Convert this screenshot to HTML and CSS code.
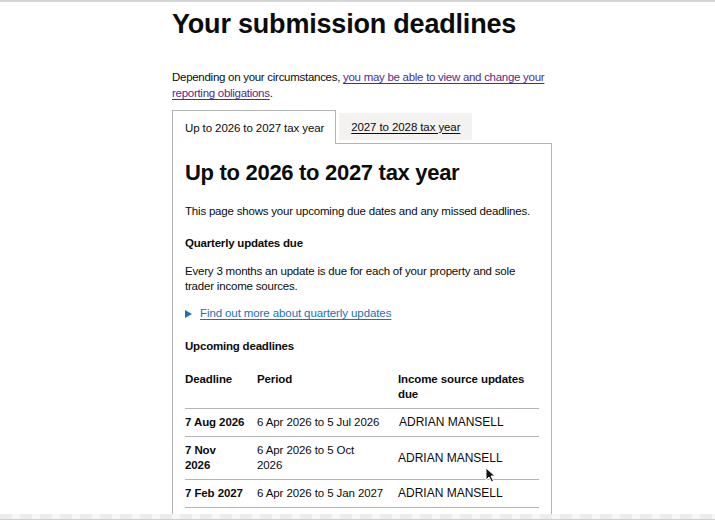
FILE: index.html
```html
<!DOCTYPE html>
<html lang="en">
<head>
<meta charset="utf-8">
<title>Your submission deadlines</title>
<link rel="stylesheet" href="styles.css">
</head>
<body>
<div class="topline"></div>
<main class="page">
  <h1 class="title">Your submission deadlines</h1>
  <p class="intro">Depending on your circumstances, <a class="link-visited" href="#">you may be able to view and change your reporting obligations</a>.</p>
  <div class="tabs">
    <ul class="tab-list">
      <li class="tab tab-selected"><a href="#">Up to 2026 to 2027 tax year</a></li>
      <li class="tab"><a href="#">2027 to 2028 tax year</a></li>
    </ul>
    <section class="panel">
      <h2 class="panel-title">Up to 2026 to 2027 tax year</h2>
      <p class="body p-first">This page shows your upcoming due dates and any missed deadlines.</p>
      <h3 class="subhead">Quarterly updates due</h3>
      <p class="body p-every">Every 3 months an update is due for each of your property and sole trader income sources.</p>
      <div class="details">
        <span class="arrow"></span>
        <a class="link-blue" href="#">Find out more about quarterly updates</a>
      </div>
      <h3 class="subhead sub-upcoming">Upcoming deadlines</h3>
      <table class="table">
        <colgroup>
          <col class="c1"><col class="c2"><col class="c3">
        </colgroup>
        <thead>
          <tr><th>Deadline</th><th>Period</th><th>Income source updates due</th></tr>
        </thead>
        <tbody>
          <tr><td class="date">7 Aug 2026</td><td>6 Apr 2026 to 5 Jul 2026</td><td class="name">ADRIAN MANSELL</td></tr>
          <tr><td class="date">7 Nov<br>2026</td><td>6 Apr 2026 to 5 Oct<br>2026</td><td class="name n2">ADRIAN MANSELL</td></tr>
          <tr><td class="date">7 Feb 2027</td><td>6 Apr 2026 to 5 Jan 2027</td><td class="name n2">ADRIAN MANSELL</td></tr>
        </tbody>
      </table>
    </section>
  </div>
</main>
<svg class="cursor" width="11" height="16" viewBox="0 0 11 16"><path d="M1 1 L1 13 L4 10 L6.5 15 L8.5 14 L6 9 L10 9 Z" fill="#111" stroke="#fff" stroke-width="1"/></svg>
<div class="bottombar"></div>
</body>
</html>
```
FILE: styles.css
```css
html, body {
  margin: 0;
  padding: 0;
  background: #fff;
}
body {
  font-family: "Liberation Sans", Arial, sans-serif;
  color: #0b0c0c;
  height: 521px;
  overflow: hidden;
}
.topline {
  height: 2px;
  background: #d4d4d4;
}
.page {
  margin-left: 172px;
  width: 380px;
}
.title {
  margin: 6px 0 0;
  font-size: 27px;
  line-height: 32px;
  font-weight: 700;
  letter-spacing: -0.2px;
}
.intro {
  margin: 29px 0 0;
  width: 390px;
  font-size: 11.5px;
  letter-spacing: -0.28px;
  line-height: 16px;
}
.link-visited {
  color: #4c2c92;
  text-decoration: underline;
  text-underline-offset: 2px;
}
.tabs {
  margin-top: 9px;
}
.tab-list {
  list-style: none;
  margin: 0;
  padding: 0;
  display: flex;
  align-items: flex-start;
  gap: 3px;
  height: 33px;
}
.tab {
  margin-top: 3px;
  background: #f3f2f1;
  height: 27px;
  display: flex;
  align-items: center;
  padding: 0 12px;
  font-size: 11.5px;
  letter-spacing: -0.1px;
}
.tab a {
  color: #0b0c0c;
  text-decoration: underline;
  text-underline-offset: 2px;
}
.tab-selected {
  margin-top: 0;
  height: 33px;
  background: #fff;
  border: 1px solid #b1b4b6;
  border-bottom: 0;
  position: relative;
  z-index: 1;
  padding: 0 11px 0 12px;
}
.tab-selected a {
  text-decoration: none;
}
.panel {
  border: 1px solid #b1b4b6;
  border-bottom: 0;
  padding: 15px 12px 20px;
  height: 400px;
}
.panel-title {
  margin: 0;
  font-size: 22px;
  line-height: 28px;
  font-weight: 700;
  letter-spacing: -0.3px;
}
.body {
  margin: 0;
  font-size: 11.5px;
  letter-spacing: -0.2px;
  line-height: 15px;
}
.p-first {
  margin-top: 17px;
}
.subhead {
  margin: 17px 0 0;
  font-size: 11.5px;
  letter-spacing: -0.2px;
  line-height: 15px;
  font-weight: 700;
}
.p-every {
  margin-top: 13px;
  max-width: 340px;
}
.details {
  margin-top: 12px;
  display: flex;
  align-items: center;
  font-size: 11.5px;
  letter-spacing: -0.1px;
  line-height: 15px;
}
.arrow {
  width: 0;
  height: 0;
  border-left: 7px solid #1d70b8;
  border-top: 4.5px solid transparent;
  border-bottom: 4.5px solid transparent;
  margin-right: 8px;
}
.link-blue {
  color: #1d70b8;
  text-decoration: underline;
  text-underline-offset: 2px;
}
.sub-upcoming {
  margin-top: 18px;
}
.table {
  margin-top: 11px;
  width: 354px;
  border-collapse: collapse;
  table-layout: fixed;
  font-size: 11.5px;
  letter-spacing: -0.1px;
  line-height: 15px;
}
.c1 { width: 72px; }
.c2 { width: 141px; }
.c3 { width: 141px; }
.table th,
.table td {
  text-align: left;
  vertical-align: top;
  padding: 6px 10px 6px 0;
  border-bottom: 1px solid #b1b4b6;
}
.table th {
  font-weight: 700;
  padding-top: 7px;
}
.table td {
  white-space: nowrap;
}
.table td.date {
  font-weight: 700;
}
.table td.name {
  font-size: 12px;
  letter-spacing: 0;
  vertical-align: middle;
  padding-left: 1px;
}
.table td.n2 {
  padding-left: 0;
}
.cursor {
  position: absolute;
  left: 485px;
  top: 467px;
}
.bottombar {
  position: fixed;
  left: 0;
  right: 0;
  bottom: 0;
  height: 7px;
  background:
    linear-gradient(#fff, #fff) bottom / 100% 1px no-repeat,
    linear-gradient(#cfcfcf, #cfcfcf) bottom 1px left 0 / 100% 1px no-repeat,
    repeating-linear-gradient(90deg, #ececec 0 12px, #f7f7f7 12px 20px);
  z-index: 2;
}
```
